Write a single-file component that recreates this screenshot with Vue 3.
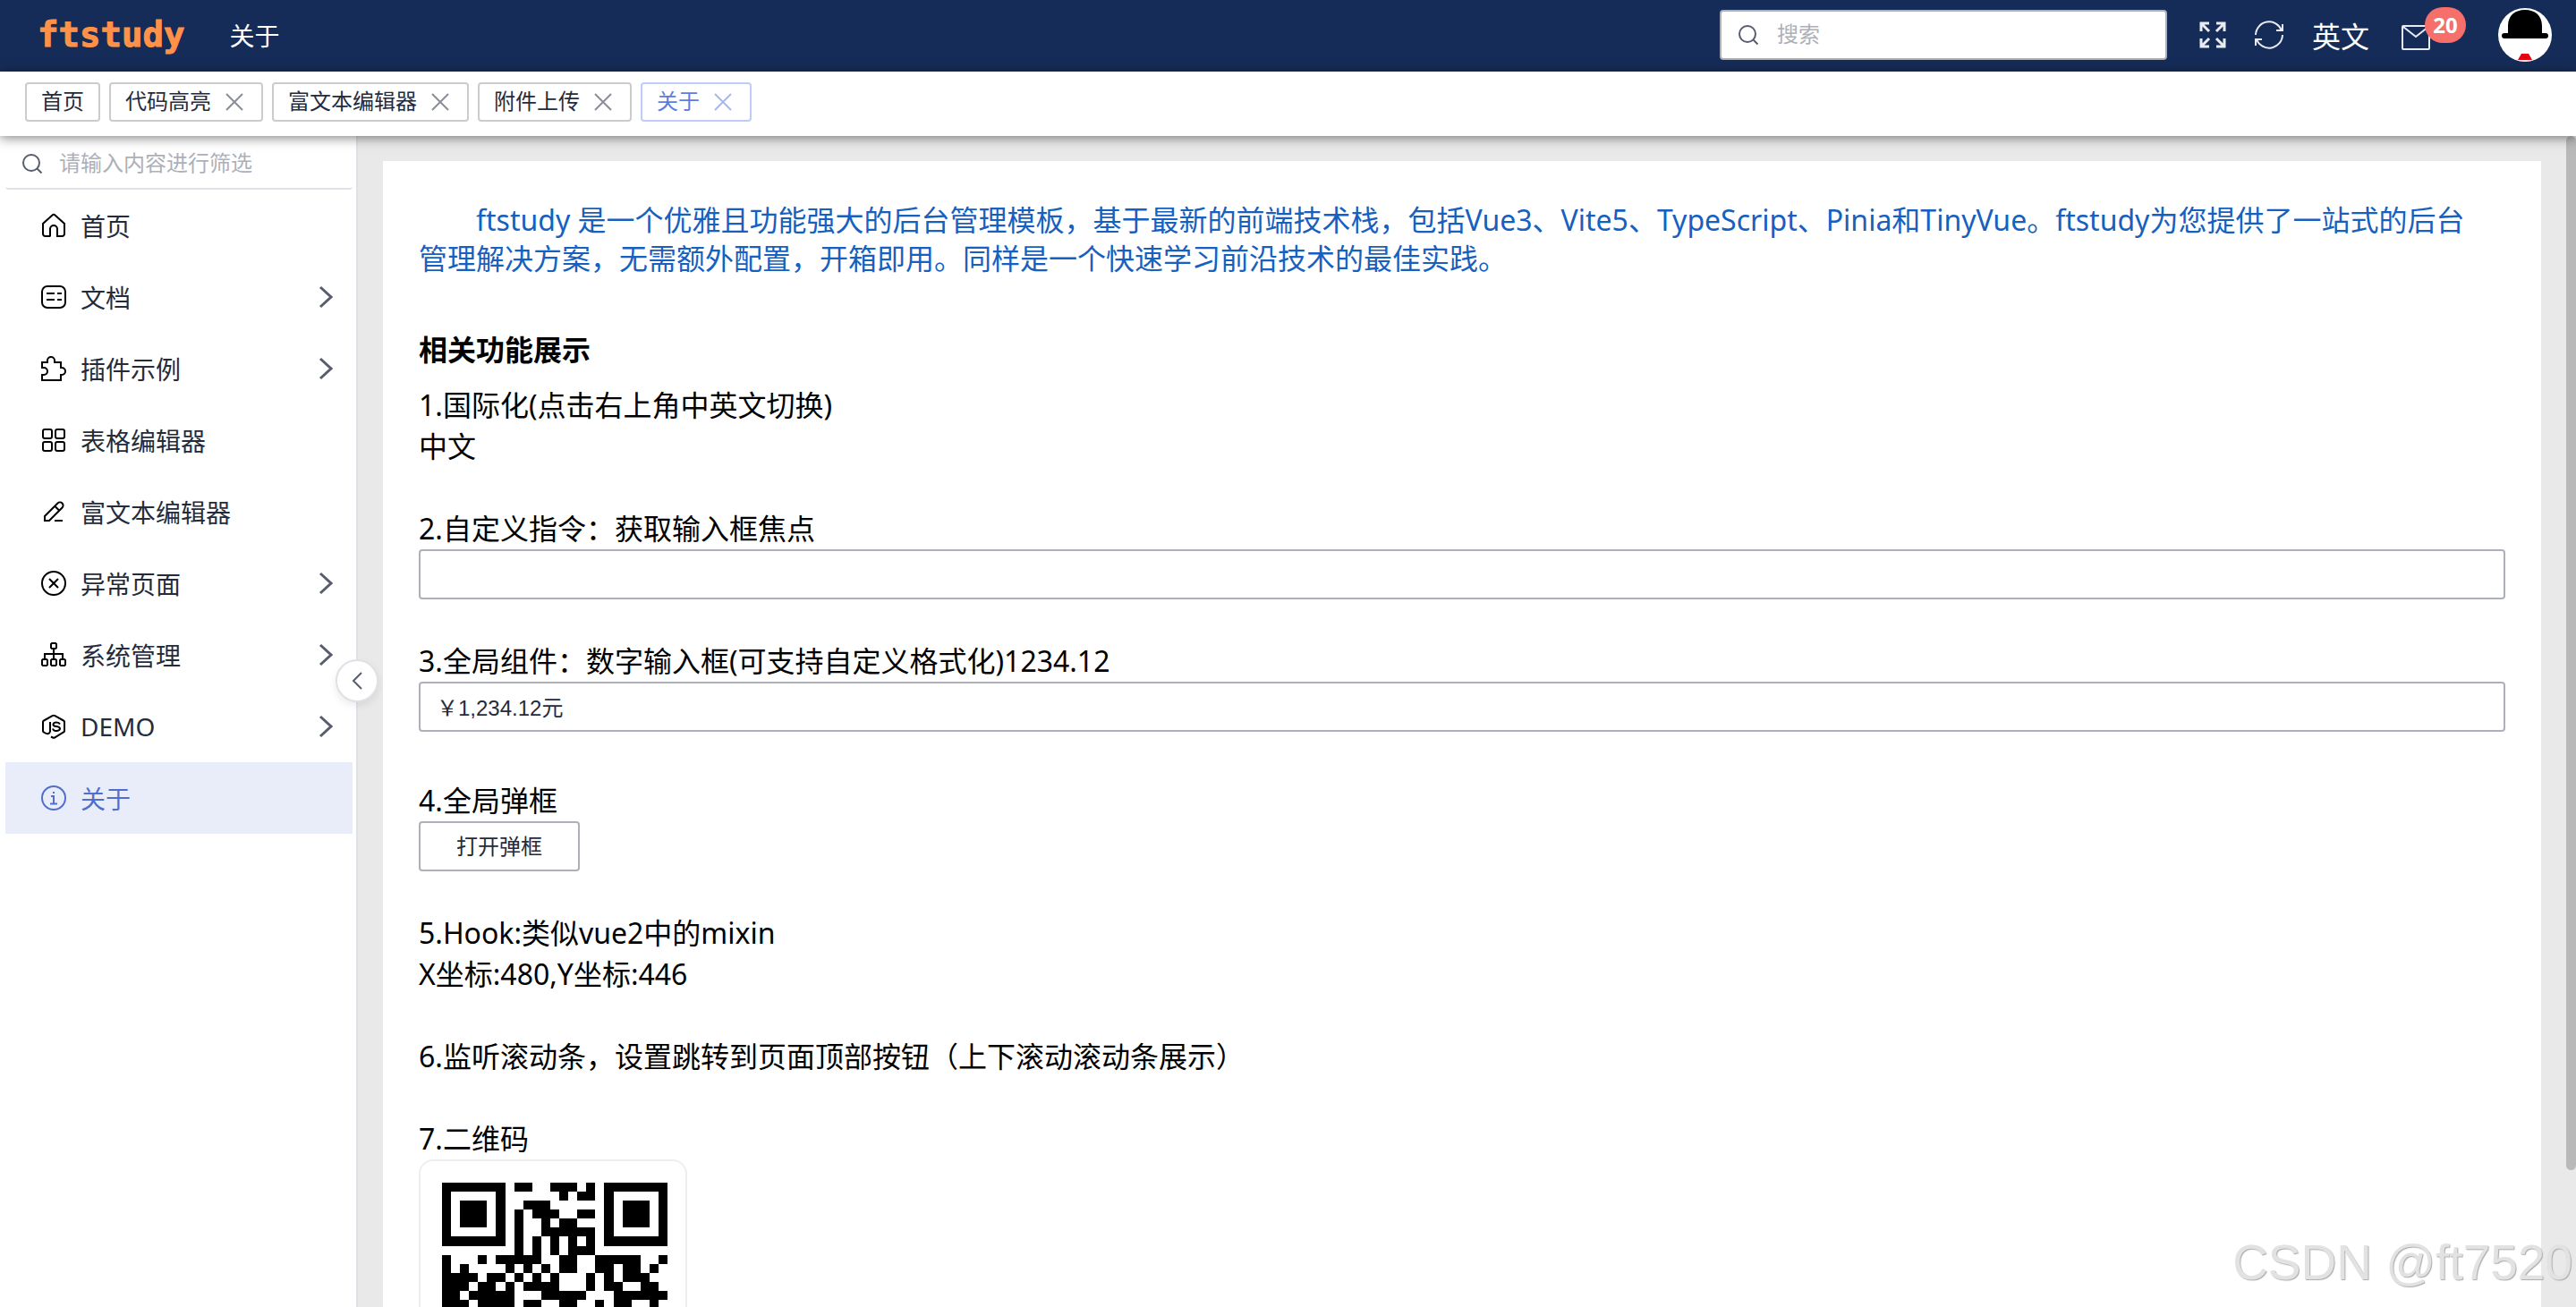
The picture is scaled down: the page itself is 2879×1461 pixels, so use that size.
<template>
  <div class="layout">
    <header class="header">
      <a href="#" class="logo">ftstudy</a>
      <span class="crumb">关于</span>
      <div class="header-right">
        <div class="search">
          <svg class="icon-search" viewBox="0 0 24 24">
            <circle cx="11" cy="11" r="9" />
            <path d="M17.5 17.5 22.5 22.5" />
          </svg>
          <input v-model="keyword" type="text" placeholder="搜索" aria-label="搜索" />
        </div>
        <button class="tool" aria-label="全屏">
          <svg class="icon-full" viewBox="0 0 30 30">
            <path d="M2 11V2h9M2 2l9 9M19 2h9v9M28 2l-9 9M2 19v9h9M2 28l9-9M28 19v9h-9M28 28l-9-9" />
          </svg>
        </button>
        <button class="tool" aria-label="刷新">
          <svg class="icon-refresh" viewBox="0 0 32 32">
            <path d="M1 16A15 15 0 0 1 30 11M31 4v7h-7M31 16A15 15 0 0 1 2 21M1 28v-7h7" />
          </svg>
        </button>
        <button class="tool lang">英文</button>
        <button class="tool mail" aria-label="消息">
          <svg class="icon-mail" viewBox="0 0 32 28">
            <rect x="1" y="1" width="30" height="26" rx="1" />
            <path d="M2 2 16 13 30 2" />
          </svg>
          <span class="badge">20</span>
        </button>
        <button class="tool avatar" aria-label="用户">
          <svg viewBox="0 0 60 60">
            <circle cx="30" cy="30" r="30" fill="#fff" />
            <path d="M11 28V20C11 8 19 2 30 2s19 6 19 18v8h4a3 3 0 0 1 0 6H7a3 3 0 0 1 0-6z" fill="#000" />
            <path d="M26 51h8l4 7H22z" fill="#e60012" />
          </svg>
        </button>
      </div>
    </header>

    <nav class="tags">
      <div v-for="tag in tags" :key="tag.name" class="tag" :class="{ active: tag.name === '关于' }">
        <a href="#">{{ tag.name }}</a>
        <button v-if="tag.closable" class="close" :aria-label="'关闭' + tag.name" @click="closeTag(tag)">
          <svg viewBox="0 0 28 28"><path d="M5 5l18 18M23 5 5 23" /></svg>
        </button>
      </div>
    </nav>

    <div class="body">
      <aside class="sidebar">
        <div class="filter">
          <svg class="icon-search" viewBox="0 0 24 24">
            <circle cx="11" cy="11" r="9" />
            <path d="M17.5 17.5 22.5 22.5" />
          </svg>
          <input v-model="filter" type="text" placeholder="请输入内容进行筛选" aria-label="筛选菜单" />
        </div>
        <ul class="menu">
          <li v-for="item in menus" :key="item.name">
            <a href="#" class="menu-item" :class="{ active: item.name === '关于' }">
              <svg class="menu-icon" viewBox="0 0 28 28">
                <path v-for="d in item.icon" :key="d" :d="d" />
              </svg>
              <span>{{ item.name }}</span>
              <svg v-if="item.children" class="arrow" viewBox="0 0 16 26"><path d="M2 2l12 11L2 24" /></svg>
            </a>
          </li>
        </ul>
        <button class="collapse" aria-label="收起菜单">
          <svg viewBox="0 0 12 20"><path d="M11 1 2 10l9 9" /></svg>
        </button>
      </aside>

      <main class="main">
        <section class="card">
          <p class="intro">
            ftstudy 是一个优雅且功能强大的后台管理模板，基于最新的前端技术栈，包括Vue3、Vite5、TypeScript、Pinia和TinyVue。ftstudy为您提供了一站式的后台管理解决方案，无需额外配置，开箱即用。同样是一个快速学习前沿技术的最佳实践。
          </p>
          <h2>相关功能展示</h2>
          <div class="block">
            <p>1.国际化(点击右上角中英文切换)</p>
            <p>中文</p>
          </div>
          <div class="block">
            <label for="focus">2.自定义指令：获取输入框焦点</label>
            <input id="focus" v-model="focusText" class="field" type="text" />
          </div>
          <div class="block wide">
            <label for="money">3.全局组件：数字输入框(可支持自定义格式化)1234.12</label>
            <input id="money" v-model="money" class="field" type="text" />
          </div>
          <div class="block">
            <p>4.全局弹框</p>
            <button class="btn">打开弹框</button>
          </div>
          <div class="block">
            <p>5.Hook:类似vue2中的mixin</p>
            <p>X坐标:480,Y坐标:446</p>
          </div>
          <div class="block">
            <p>6.监听滚动条，设置跳转到页面顶部按钮（上下滚动滚动条展示）</p>
          </div>
          <div class="block">
            <p>7.二维码</p>
            <div class="qrcode">
              <svg viewBox="0 0 25 25" shape-rendering="crispEdges"><path :d="qrPath" /></svg>
            </div>
          </div>
        </section>
        <div class="scrollbar"></div>
      </main>
    </div>
    <div class="watermark">CSDN @ft7520</div>
  </div>
</template>

<script setup>
import { ref } from "vue";

const keyword = ref("");
const filter = ref("");
const focusText = ref("");
const money = ref("￥1,234.12元");

// 页签
const tags = ref([
  { name: "首页", closable: false },
  { name: "代码高亮", closable: true },
  { name: "富文本编辑器", closable: true },
  { name: "附件上传", closable: true },
  { name: "关于", closable: true },
]);

const closeTag = (tag) => {
  tags.value = tags.value.filter((item) => item !== tag);
};

// 侧边菜单
const menus = [
  {
    name: "首页",
    icon: ["M10.5 26H4.5a2.5 2.5 0 0 1-2.5-2.5V12L12.5 2.500q1.5-1.5 3 0L26 12v11.5a2.5 2.5 0 0 1-2.5 2.5H18v-8a4 4 0 0 0-8 0v8"],
  },
  {
    name: "文档",
    children: true,
    icon: ["M7 2h14a6 6 0 0 1 6 6v12a6 6 0 0 1-6 6H7a6 6 0 0 1-6-6V8a6 6 0 0 1 6-6z", "M6 10h9M18 10h5M6 17h9M18 17h5"],
  },
  {
    name: "插件示例",
    children: true,
    icon: ["M1 7h6V5a4 4 0 0 1 8 0v2h7v6h1a4 4 0 0 1 0 8h-1v6H1v-6h2a4 4 0 0 0 0-8H1z"],
  },
  {
    name: "表格编辑器",
    icon: [
      "M4 2h6a2 2 0 0 1 2 2v6a2 2 0 0 1-2 2H4a2 2 0 0 1-2-2V4a2 2 0 0 1 2-2z",
      "M18 2h6a2 2 0 0 1 2 2v6a2 2 0 0 1-2 2h-6a2 2 0 0 1-2-2V4a2 2 0 0 1 2-2z",
      "M4 16h6a2 2 0 0 1 2 2v6a2 2 0 0 1-2 2H4a2 2 0 0 1-2-2v-6a2 2 0 0 1 2-2z",
      "M18 16h6a2 2 0 0 1 2 2v6a2 2 0 0 1-2 2h-6a2 2 0 0 1-2-2v-6a2 2 0 0 1 2-2z",
    ],
  },
  {
    name: "富文本编辑器",
    icon: ["M4 24v-5L18.500 4.500a3.200 3.200 0 0 1 5 5L9 24zM15.500 8l5 5", "M15 24h9"],
  },
  {
    name: "异常页面",
    children: true,
    icon: ["M1 14a13 13 0 1 0 26 0a13 13 0 1 0-26 0", "M9 9l10 10M19 9 9 19"],
  },
  {
    name: "系统管理",
    children: true,
    icon: [
      "M12 1h4l1 1v4l-1 1h-4l-1-1V2z",
      "M14 7v12M4 19v-6h20v6",
      "M2 19h4l1 1v5l-1 1H2l-1-1v-5z",
      "M12 19h4l1 1v5l-1 1h-4l-1-1v-5z",
      "M22 19h4l1 1v5l-1 1h-4l-1-1v-5z",
    ],
  },
  {
    name: "DEMO",
    children: true,
    icon: [
      "M11 25.500 13 26.500q1 .5 2 0l10-6q1-.5 1-1.500V9q0-1-1-1.500L15 2q-1-.6-2 0L3 7.500Q2 8 2 9v10q0 1 1 1.500 6 4 7-1V9",
      "M21 11.500q-1-2-4-2t-3.500 2 3.500 2.500 4 2.500-3.500 2.500-4.500-2.500",
    ],
  },
  {
    name: "关于",
    icon: ["M1 14a13 13 0 1 0 26 0a13 13 0 1 0-26 0", "M11 12h3v8M10 20.500h8M14 7v2"],
  },
];

// 二维码点阵
const qrRows = [
  "1111111011001110101111111",
  "1000001000000101101000001",
  "1011101001110000001011101",
  "1011101010111001101011101",
  "1011101010010110001011101",
  "1000001010011111101000001",
  "1111111010101010101111111",
  "0000000010101011100000000",
  "1000101111100110011111001",
  "1010000101010110011011010",
  "1111011010101000101011100",
  "1110110101111000101100110",
  "1101111100011111000111111",
  "1110111101100110010110010",
];

const qrPath = qrRows
  .map((row, y) => [...row].map((cell, x) => (cell === "1" ? `M${x} ${y}h1v1h-1z` : "")).join(""))
  .join("");
</script>

<style>
html,
body,
#app {
  height: 100%;
}

body {
  margin: 0;
  overflow: hidden;
}
</style>

<style scoped>
.layout {
  position: relative;
  display: flex;
  flex-direction: column;
  height: 100%;
  overflow: hidden;
  color: #000;
  font-family: "Noto Sans", "Noto Sans CJK SC", sans-serif;
  font-size: 32px;
}

* {
  box-sizing: border-box;
}

svg {
  display: block;
  flex: none;
  fill: none;
  stroke: currentColor;
  stroke-width: 2;
}

button {
  padding: 0;
  border: 0;
  background: none;
  color: inherit;
  font: inherit;
  cursor: pointer;
}

input {
  min-width: 0;
  padding: 0;
  border: 0;
  outline: 0;
  background: none;
  color: #252b3a;
  font-family: "Liberation Sans", "Noto Sans CJK SC", sans-serif;
  font-size: 24px;
}

input::placeholder {
  color: #adb0b8;
  opacity: 1;
}

a {
  color: inherit;
  text-decoration: none;
}

p,
h2 {
  margin: 0;
}

.header {
  display: flex;
  flex: none;
  align-items: center;
  height: 80px;
  padding: 0 27px 2px 42px;
  background: #162c58;
  color: #fff;
}

.logo {
  color: #ff9248;
  font-family: "DejaVu Sans Mono", monospace;
  font-size: 39px;
  font-weight: bold;
  line-height: 48px;
  -webkit-text-stroke: 1px #ff9248;
}

.crumb {
  margin-left: 50px;
  font-size: 28px;
}

.header-right {
  display: flex;
  align-items: center;
  gap: 32px;
  margin-left: auto;
}

.search {
  display: flex;
  align-items: center;
  gap: 20px;
  width: 500px;
  height: 56px;
  margin-right: 4px;
  padding: 0 18px;
  border: 2px solid #adb0b8;
  border-radius: 4px;
  background: #fff;
}

.search input,
.filter input {
  flex: 1;
}

.icon-search {
  width: 24px;
  height: 24px;
  color: #575d6c;
}

.tool {
  flex: none;
  color: #e8ebf2;
}

.icon-full {
  width: 30px;
  stroke-width: 3;
}

.icon-refresh {
  width: 32px;
}

.lang {
  margin-right: 4px;
  color: #fff;
  font-size: 32px;
}

.mail {
  position: relative;
}

.icon-mail {
  width: 32px;
  margin-top: 6px;
}

.badge {
  position: absolute;
  top: -14px;
  left: 26px;
  min-width: 46px;
  height: 40px;
  border-radius: 20px;
  background: #f66f6a;
  color: #fff;
  font-size: 24px;
  font-weight: bold;
  line-height: 40px;
}

.avatar {
  width: 60px;
  height: 60px;
  margin-left: 44px;
}

.avatar svg {
  stroke: none;
}

.tags {
  position: relative;
  z-index: 2;
  display: flex;
  flex: none;
  gap: 10px;
  height: 72px;
  padding: 12px 28px;
  background: #fff;
  box-shadow: 0 2px 12px rgba(0, 0, 0, 0.5);
}

.tag {
  display: flex;
  align-items: center;
  height: 44px;
  padding: 0 16px;
  border: 2px solid #ccc;
  border-radius: 4px;
  color: #252b3a;
  font-size: 24px;
  line-height: 36px;
}

.tag a {
  padding-bottom: 2px;
}

.tag.active {
  border-color: #beccfa;
  color: #5e7ce0;
}

.close {
  width: 28px;
  margin-left: 12px;
  color: #8a8e99;
}

.active .close {
  color: #a8b8ec;
}

.body {
  display: flex;
  flex: 1;
  min-height: 0;
}

.sidebar {
  position: relative;
  z-index: 1;
  flex: none;
  width: 400px;
  padding: 0 4px 0 6px;
  border-right: 2px solid #dfe1e6;
  background: #fff;
}

.filter {
  display: flex;
  align-items: center;
  gap: 18px;
  height: 60px;
  padding: 4px 18px 0;
  border-bottom: 2px solid #dfe1e6;
  border-radius: 4px;
}

.menu {
  margin: 0;
  padding: 0;
  list-style: none;
}

.menu-item {
  display: flex;
  align-items: center;
  gap: 16px;
  height: 80px;
  padding: 0 22px 0 40px;
  color: #252b3a;
  font-size: 28px;
}

.menu-icon {
  width: 28px;
  height: 28px;
  color: #000;
}

.menu-item.active {
  background: #e9edfa;
  color: #526ecc;
}

.active .menu-icon {
  color: inherit;
}

.arrow {
  width: 16px;
  margin-left: auto;
  color: #575d6c;
  stroke-width: 3;
}

.collapse {
  position: absolute;
  top: 585px;
  right: -25px;
  display: flex;
  align-items: center;
  justify-content: center;
  width: 48px;
  height: 48px;
  border: 2px solid #dfe1e6;
  border-radius: 50%;
  background: #fff;
  color: #575d6c;
  box-shadow: 0 4px 8px rgba(0, 0, 0, 0.08);
}

.collapse svg {
  width: 12px;
}

.main {
  position: relative;
  flex: 1;
  min-width: 0;
  padding: 28px 39px 0 28px;
  overflow: hidden;
  background: #e9e9e9;
}

.card {
  padding: 44px 40px;
  background: #fff;
  line-height: 46px;
}

.intro {
  margin-bottom: 58px;
  padding-right: 16px;
  color: #1660c0;
  line-height: 43px;
  text-indent: 64px;
}

h2 {
  margin-bottom: 16px;
  font-size: 32px;
  line-height: 46px;
}

.block {
  display: flex;
  flex-direction: column;
  align-items: flex-start;
  margin-bottom: 46px;
}

.block.wide {
  margin-bottom: 54px;
}

.field {
  width: 100%;
  height: 56px;
  padding: 0 18px 2px;
  border: 2px solid #adb0b8;
  border-radius: 4px;
}

.btn {
  height: 56px;
  padding: 0 40px;
  border: 2px solid #adb0b8;
  border-radius: 4px;
  color: #252b3a;
  font-size: 24px;
}

.qrcode {
  width: 300px;
  padding: 24px;
  border: 2px solid #eee;
  border-radius: 16px;
}

.qrcode svg {
  width: 252px;
  fill: #000;
  stroke: none;
}

.scrollbar {
  position: absolute;
  top: 0;
  right: 0;
  width: 11px;
  height: 1156px;
  border-radius: 6px;
  background: #b9b9b9;
}

.watermark {
  position: absolute;
  right: 4px;
  bottom: 18px;
  z-index: 3;
  color: #e2e2e2;
  font-family: "Liberation Sans", sans-serif;
  font-size: 55px;
  text-shadow: 1px 1px 1px #aaa;
  pointer-events: none;
}
</style>
